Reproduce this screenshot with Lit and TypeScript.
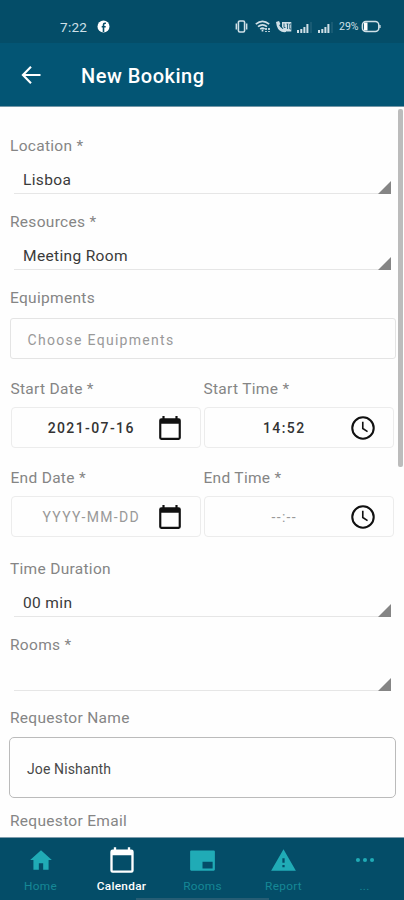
import { LitElement, html, css, svg } from "lit";
import { customElement, property } from "lit/decorators.js";

const calendar = svg`<path d="M5 1v2H4a2 2 0 0 0-2 2v16a2 2 0 0 0 2 2h16a2 2 0 0 0 2-2V5a2 2 0 0 0-2-2h-1V1h-2v2H7V1zM4 8h16v13H4z" fill-rule="evenodd"/>`;
const clock = svg`<circle cx="12" cy="12" r="9.9" fill="none" stroke="currentColor" stroke-width="1.9"/><path d="M11.8 6.2v6.3l4.4 2.8" fill="none" stroke="currentColor" stroke-width="1.5"/>`;

@customElement("status-bar")
class StatusBar extends LitElement {
  static styles = css`
    :host { display: flex; height: 43px; background: #044d68; color: #d0e0e7; align-items: center; padding: 10px 23px 0 60px; box-sizing: border-box; }
    .time { font-size: 13.5px; letter-spacing: 0.3px; width: 37px; }
    .spacer { flex: 1; }
    svg { display: block; flex: none; }
    .status { display: flex; align-items: center; }
    .vibrate { margin-right: 7px; }
    .wifi { margin-right: 5px; }
    .volte { margin-right: 5px; }
    .signal { margin-right: 5px; }
    .percent { font-size: 10.5px; width: 22px; letter-spacing: 0; }
  `;
  signal() {
    return svg`<svg class="signal" width="16" height="12" viewBox="0 0 16 12" fill="currentColor"><path d="M0 9h2v3H0zM3.3 8h2v4h-2zM6.4 6h2v6h-2zM9.4 3h2v9h-2z"/><path d="M13.5 1h1v11h-1z" opacity=".2"/></svg>`;
  }
  render() {
    return html`
      <span class="time">7:22</span>
      <svg width="13" height="13" viewBox="0 0 13 13"><circle cx="6.5" cy="6.5" r="6" fill="#fff"/><path d="M8.9 3.3H8c-1 0-1.5.5-1.5 1.4V12M4.7 6.8h4" fill="none" stroke="#044d68" stroke-width="1.6"/></svg>
      <span class="spacer"></span>
      <div class="status">
        <svg class="vibrate" width="13" height="13" viewBox="0 0 13 13" fill="none" stroke="currentColor"><rect x="3.4" y="1" width="6.2" height="11" rx="1.4" stroke-width="1.6"/><path d="M1.3 3.5v6M11.7 3.5v6" stroke-width="1.4"/></svg>
        <svg class="wifi" width="16" height="13" viewBox="0 0 16 13" fill="none" stroke="currentColor" stroke-width="1.7"><path d="M.8 4.1Q7.5-1.5 14.2 4.1M3 6.7q4.5-3.8 9 0M5.2 9.1q2.3-1.9 4.4 0"/><path d="M7.5 9.5v2.4M11 8v4M14 8v4" stroke-dasharray="2 1"/></svg>
        <svg class="volte" width="16" height="12" viewBox="0 0 16 12"><path d="M0 1l3-1 1.4 3-1.2 1.2Q4.3 6.8 6.8 8L8 6.8 10.5 8.5 10 11Q3 12 .8 5z" fill="currentColor"/><path d="M6 1h9.3v9.5H10.5L6 6z" fill="currentColor"/><path d="M8 2.5v4h1.5M10.5 3h1.8M11.5 3v5M15 3h-1.2v5H15" fill="none" stroke="#044d68" stroke-width=".8"/></svg>
        ${this.signal()}${this.signal()}
        <span class="percent">29%</span>
        <svg width="20" height="13" viewBox="0 0 20 13"><rect x="1.4" y="1.5" width="16.4" height="10" rx="3.5" fill="none" stroke="currentColor" stroke-width="1.5"/><path d="M3 2.5h3.5v8H3zM18.5 5h1v3h-1z" fill="#fff"/></svg>
      </div>`;
  }
}

@customElement("booking-header")
class BookingHeader extends LitElement {
  static styles = css`
    :host { display: flex; align-items: center; height: 64px; box-sizing: border-box; padding: 1px 0 0 21px; background: #035574; color: #fff; border-bottom: 1px solid #7397a7; }
    svg { display: block; }
    h1 { margin: 2px 0 0 40px; font-size: 20px; line-height: 26px; font-weight: 500; letter-spacing: 0.5px; }
  `;
  render() {
    return html`<svg width="20" height="20" viewBox="0 0 20 20" fill="none" stroke="#fff" stroke-width="2.1"><path d="M19.5 10H2.5M10 1.7L1.9 10l8.1 8.3"/></svg><h1>New Booking</h1>`;
  }
}

@customElement("form-label")
class FormLabel extends LitElement {
  static styles = css`
    :host { display: block; height: 20px; line-height: 22px; font-size: 15.5px; letter-spacing: 0.3px; color: #858585; white-space: nowrap; }
  `;
  render() { return html`<slot></slot>`; }
}

@customElement("select-field")
class SelectField extends LitElement {
  @property() label = "";
  @property() value = "";
  static styles = css`
    :host { display: block; }
    form-label { margin-left: 10px; }
    .select { display: flex; justify-content: space-between; align-items: flex-end; box-sizing: border-box; height: 39px; margin: 0 13px 0 14px; border-bottom: 1.5px solid #e6e6e6; }
    :host([short]) .select { height: 37px; }
    .value { padding: 0 0 3px 9px; line-height: 20px; font-size: 15.5px; letter-spacing: 0.35px; color: #3a3a3a; }
    .corner { width: 13px; height: 13px; margin-bottom: -1px; background: #858585; clip-path: polygon(100% 0, 100% 100%, 0 100%); }
  `;
  render() {
    return html`<form-label>${this.label}</form-label><div class="select"><span class="value">${this.value}</span><span class="corner"></span></div>`;
  }
}

@customElement("picker-field")
class PickerField extends LitElement {
  @property() label = "";
  @property() value = "";
  @property() placeholder = "";
  @property() kind = "date";
  static styles = css`
    :host { display: block; width: 190.5px; }
    .box { display: flex; align-items: center; box-sizing: border-box; height: 41px; margin-top: 9px; border: 1.5px solid #ececec; border-radius: 4px; }
    .value { flex: 1; padding: 1px 0 0 14px; text-align: center; font-size: 14px; font-weight: 500; letter-spacing: 1.4px; color: #333; white-space: nowrap; }
    .empty { font-weight: 400; color: #999; letter-spacing: 1.35px; }
    .icon { display: block; margin-right: 17px; color: #111; }
  `;
  render() {
    return html`<form-label>${this.label}</form-label>
      <div class="box">
        <span class="value ${this.value ? "" : "empty"}">${this.value || this.placeholder}</span>
        <svg class="icon" width="26" height="26" viewBox="0 0 24 24" fill="currentColor">${this.kind === "date" ? calendar : clock}</svg>
      </div>`;
  }
}

@customElement("bottom-nav")
class BottomNav extends LitElement {
  static styles = css`
    :host { display: grid; grid-template-columns: repeat(5, 81px); position: relative; height: 63px; box-sizing: border-box; background: #044d68; border-top: 1px solid #7f9dad; overflow: hidden; }
    .item { display: flex; flex-direction: column; align-items: center; color: #20abb6; }
    .icon { height: 28px; margin-top: 8px; display: flex; align-items: center; }
    .label { line-height: 16px; margin-top: 4px; font-size: 11.8px; letter-spacing: 0.3px; color: #168896; }
    .active { color: #fff; }
    .active .label { color: #fff; font-weight: 500; }
    .handle { position: absolute; bottom: 0; left: 136px; width: 133px; height: 2px; background: #265d74; }
  `;
  items = [
    { label: "Home", size: 26, icon: svg`<path d="M10 21v-6h4v6h5v-9h3L12 3 2 12h3v9z"/>` },
    { label: "Calendar", size: 28, icon: calendar },
    { label: "Rooms", size: 27, icon: svg`<path fill-rule="evenodd" d="M2 3h20a1 1 0 0 1 1 1v16a1 1 0 0 1-1 1H2a1 1 0 0 1-1-1V4a1 1 0 0 1 1-1zM12 13v6h9v-6z"/>` },
    { label: "Report", size: 27, icon: svg`<path fill-rule="evenodd" d="M1 21h22L12 2zM13 18h-2v-2h2zM13 14h-2v-4h2z"/>` },
    { label: "...", size: 26, icon: svg`<circle cx="5.5" cy="12" r="1.9"/><circle cx="12" cy="12" r="1.9"/><circle cx="18.5" cy="12" r="1.9"/>` },
  ];
  render() {
    return html`${this.items.map((i, n) => html`<div class="item ${n === 1 ? "active" : ""}">
      <span class="icon"><svg width=${i.size} height=${i.size} viewBox="0 0 24 24" fill="currentColor">${i.icon}</svg></span>
      <span class="label">${i.label}</span></div>`)}<span class="handle"></span>`;
  }
}

@customElement("app-root")
class AppRoot extends LitElement {
  static styles = css`
    :host { display: flex; flex-direction: column; width: 404px; height: 900px; overflow: hidden; background: #fefefe; font-family: Roboto, "Liberation Sans", sans-serif; }
    .body { position: relative; flex: 1; min-height: 0; overflow: hidden; padding-top: 28px; box-sizing: border-box; }
    .h73 { height: 73px; }
    .h76 { height: 76px; }
    .start { height: 89px; }
    .end { height: 91px; }
    .equipments { height: 91px; }
    .requestor { height: 103px; }
    form-label { margin-left: 10px; }
    .pair { display: flex; gap: 2.5px; padding-left: 10.5px; }
    .box { display: flex; align-items: center; box-sizing: border-box; height: 41px; margin: 11px 8.5px 0 9.5px; padding: 2px 0 0 17px; border: 1.5px solid #e4e4e4; border-radius: 3px; font-size: 14px; letter-spacing: 1.3px; color: #999; }
    .name { height: 61px; margin: 10px 8px 0 9px; border: 1.5px solid #bbb; border-radius: 5px; font-size: 14px; letter-spacing: 0.12px; color: #484848; }
    .scroll { position: absolute; top: 2px; right: 1px; width: 5px; height: 358px; border-radius: 2px; background: #bcbcbc; }
  `;
  render() {
    return html`
      <status-bar></status-bar>
      <booking-header></booking-header>
      <div class="body">
        <select-field class="h76" label="Location *" value="Lisboa"></select-field>
        <select-field class="h76" label="Resources *" value="Meeting Room"></select-field>
        <div class="equipments"><form-label>Equipments</form-label><div class="box">Choose Equipments</div></div>
        <div class="pair start">
          <picker-field label="Start Date *" value="2021-07-16"></picker-field>
          <picker-field label="Start Time *" value="14:52" kind="time"></picker-field>
        </div>
        <div class="pair end">
          <picker-field label="End Date *" placeholder="YYYY-MM-DD"></picker-field>
          <picker-field label="End Time *" placeholder="--:--" kind="time"></picker-field>
        </div>
        <select-field class="h76" label="Time Duration" value="00 min"></select-field>
        <select-field class="h73" short label="Rooms *"></select-field>
        <div class="requestor"><form-label>Requestor Name</form-label><div class="box name">Joe Nishanth</div></div>
        <form-label>Requestor Email</form-label>
        <div class="scroll"></div>
      </div>
      <bottom-nav></bottom-nav>`;
  }
}
